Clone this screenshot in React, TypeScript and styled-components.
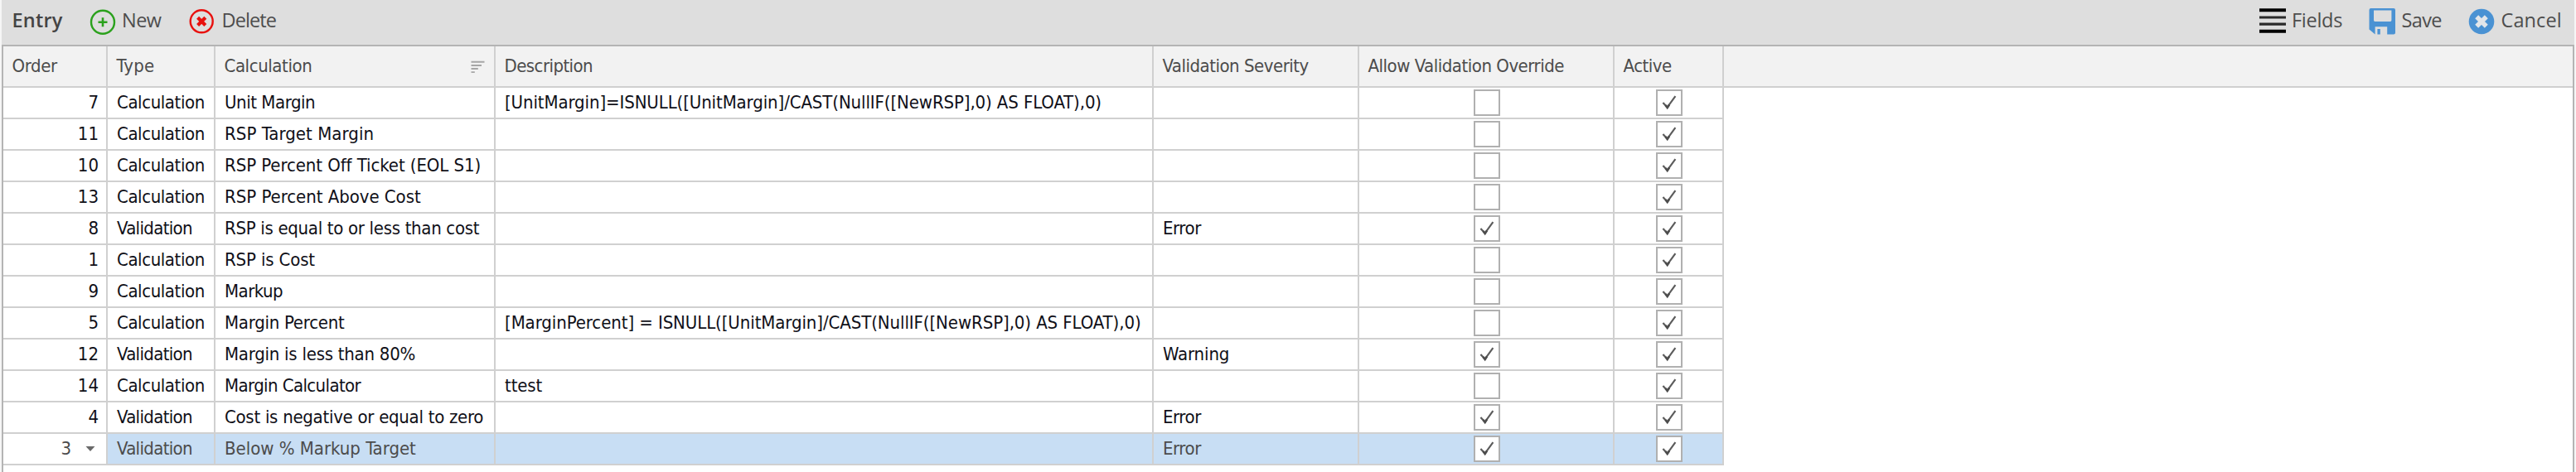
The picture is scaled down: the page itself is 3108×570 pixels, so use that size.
import React from 'react';
import styled, { createGlobalStyle } from 'styled-components';

const GlobalStyle = createGlobalStyle`
  *, *::before, *::after { box-sizing: border-box; }
  body { margin: 0; background: #fff; }
`;

const Page = styled.div`
  width: 3108px;
  height: 570px;
  padding: 0 2px;
  display: flex;
  flex-direction: column;
  overflow: hidden;
  background: #f6f6f6;
  font-family: 'DejaVu Sans Condensed', 'DejaVu Sans', sans-serif;
  font-size: 22px;
`;

const Toolbar = styled.header`
  height: 54px;
  flex: none;
  display: flex;
  align-items: flex-start;
  padding-left: 12.5px;
  background: #dedede;
  color: #4d4d4d;
  font-family: 'Open Sans', 'Noto Sans', sans-serif;
  font-size: 23.5px;
`;

const Title = styled.div`
  width: 93.3px;
  line-height: 49px;
  font-weight: 600;
  letter-spacing: 0.2px;
  color: #444;
`;

const ToolButton = styled.button<{ $width: number; $gap: number; $track: number }>`
  width: ${(p) => p.$width}px;
  height: 51px;
  padding: 0;
  border: 0;
  background: none;
  display: flex;
  align-items: flex-start;
  gap: ${(p) => p.$gap}px;
  font: inherit;
  line-height: 49px;
  color: inherit;
  letter-spacing: ${(p) => p.$track}px;
  white-space: nowrap;
`;

const Icon = styled.svg`
  flex: none;
  display: block;
`;

const Spacer = styled.div`
  flex: 1;
`;

const Grid = styled.main`
  flex: 1;
  border: 2px solid #b4b4b4;
  border-bottom: 0;
  background: #fff;
`;

const columns = '126px 130px 338px 794px 248px 308px 132px';

const HeaderRow = styled.div`
  display: grid;
  grid-template-columns: ${columns} 1fr;
  height: 50px;
  background: #f2f2f2;
  border-bottom: 2px solid #d0d0d0;
  color: #4c4c4c;
`;

const HeaderCell = styled.div<{ $track?: number }>`
  display: flex;
  justify-content: space-between;
  padding: 0 11px 0 10.5px;
  line-height: 48px;
  border-right: 2px solid #d0d0d0;
  letter-spacing: ${(p) => p.$track ?? 0}px;
  white-space: nowrap;
  &:last-child { border-right: 0; }
`;

const Row = styled.div<{ $selected?: boolean }>`
  display: grid;
  grid-template-columns: ${columns};
  width: 2076px;
  height: 38px;
  background: ${(p) => (p.$selected ? '#c8def4' : '#fff')};
  color: ${(p) => (p.$selected ? '#4c4c4c' : '#101018')};
`;

const Cell = styled.div<{ $track?: number }>`
  padding-left: 11px;
  line-height: 36px;
  border-right: 2px solid #d0d0d0;
  border-bottom: 2px solid #d0d0d0;
  letter-spacing: ${(p) => p.$track ?? 0}px;
  white-space: pre;
`;

const OrderCell = styled(Cell)`
  display: flex;
  justify-content: flex-end;
  align-items: center;
  gap: 17px;
  padding: 0 9px 0 0;
  background: #fff;
`;

const Arrow = styled(Icon)`
  margin-right: 4px;
`;

const CheckCell = styled(Cell)`
  display: flex;
  align-items: center;
  justify-content: center;
  padding-left: 2px;
`;

const Box = styled.div`
  width: 32px;
  height: 32px;
  border: 2px solid #b0b0b0;
  background: #fff;
`;

function Check({ on }: { on: boolean }) {
  return (
    <Box role="checkbox" aria-checked={on}>
      {on && (
        <Icon width="28" height="28" viewBox="2 2 28 28" fill="none">
          <path d="M8.4 16 L13.6 21.6 L23.4 8.2" stroke="#5c5c5c" strokeWidth="2.2" />
          <path d="M11.4 19 L13.7 22 L16 18.6" stroke="#4c4c4c" strokeWidth="2.6" />
        </Icon>
      )}
    </Box>
  );
}

const track: Record<string, number> = {
  Calculation: -0.42,
  Validation: -0.67,
  Error: -0.45,
  Warning: -0.14,
};

type Entry = {
  order: number;
  type: 'Calculation' | 'Validation';
  name: string;
  nameTrack: number;
  description?: string;
  descriptionTrack?: number;
  severity?: string;
  override?: boolean;
  selected?: boolean;
};

const entries: Entry[] = [
  { order: 7, type: 'Calculation', name: 'Unit Margin', nameTrack: -0.45, description: '[UnitMargin]=ISNULL([UnitMargin]/CAST(NullIF([NewRSP],0) AS FLOAT),0)', descriptionTrack: -0.11 },
  { order: 11, type: 'Calculation', name: 'RSP Target Margin', nameTrack: 0.05 },
  { order: 10, type: 'Calculation', name: 'RSP Percent Off Ticket (EOL S1)', nameTrack: -0.08 },
  { order: 13, type: 'Calculation', name: 'RSP Percent Above Cost', nameTrack: -0.04 },
  { order: 8, type: 'Validation', name: 'RSP is equal to or less than cost', nameTrack: -0.31, severity: 'Error', override: true },
  { order: 1, type: 'Calculation', name: 'RSP is Cost', nameTrack: -0.16 },
  { order: 9, type: 'Calculation', name: 'Markup', nameTrack: -0.51 },
  { order: 5, type: 'Calculation', name: 'Margin Percent', nameTrack: -0.27, description: '[MarginPercent] = ISNULL([UnitMargin]/CAST(NullIF([NewRSP],0) AS FLOAT),0)', descriptionTrack: -0.09 },
  { order: 12, type: 'Validation', name: 'Margin is less than 80%', nameTrack: -0.25, severity: 'Warning', override: true },
  { order: 14, type: 'Calculation', name: 'Margin Calculator', nameTrack: -0.6, description: 'ttest', descriptionTrack: -0.13 },
  { order: 4, type: 'Validation', name: 'Cost is negative or equal to zero', nameTrack: -0.28, severity: 'Error', override: true },
  { order: 3, type: 'Validation', name: 'Below % Markup Target', nameTrack: -0.02, severity: 'Error', override: true, selected: true },
];

export default function App() {
  return (
    <Page>
      <GlobalStyle />
      <Toolbar>
        <Title>Entry</Title>
        <ToolButton $width={119.7} $gap={7.2} $track={-0.5}>
          <Icon width="32" height="51" viewBox="0 0 32 51" fill="none" stroke="#2ba11d">
            <circle cx="16" cy="26.7" r="14" strokeWidth="2.4" />
            <path d="M10.5 26.7 H21.5 M16 21.2 V32.2" strokeWidth="2.6" />
          </Icon>
          New
        </ToolButton>
        <ToolButton $width={119.7} $gap={8} $track={-0.9}>
          <Icon width="32" height="51" viewBox="0 0 32 51" fill="none" stroke="#e8110f">
            <circle cx="16.2" cy="25.8" r="13.5" strokeWidth="2.4" />
            <path d="M11.6 21.2 L20.8 30.4 M20.8 21.2 L11.6 30.4" strokeWidth="4.2" />
          </Icon>
          Delete
        </ToolButton>
        <Spacer />
        <ToolButton $width={132} $gap={7} $track={-0.28}>
          <Icon width="32" height="51" viewBox="0 0 32 51">
            <path d="M0 10.2 H32 V14.2 H0 Z M0 35.8 H32 V39.8 H0 Z" fill="#000" />
            <path d="M0 19.4 H32 V22.6 H0 Z M0 27.6 H32 V30.8 H0 Z" fill="#2a2a2a" />
          </Icon>
          Fields
        </ToolButton>
        <ToolButton $width={119.7} $gap={7.5} $track={-0.65}>
          <Icon width="32" height="51" viewBox="0 0 32 51" fill="#4a92d3">
            <path
              fillRule="evenodd"
              d="M2.5 10 H30 Q32 10 32 12 V39.5 Q32 41.5 30 41.5 H22.2 V32.2 H7.6 V41.5 L0.5 35.5 V12 Q0.5 10 2.5 10 Z M6 12.4 V24.6 Q6 26 7.4 26 H26 Q27.4 26 27.4 24.6 V12.4 Z"
            />
            <path d="M10.4 35 H13.8 V41.5 H10.4 Z" />
          </Icon>
          Save
        </ToolButton>
        <ToolButton $width={128.3} $gap={7.8} $track={0.1}>
          <Icon width="32" height="51" viewBox="0 0 32 51" fill="none">
            <circle cx="16" cy="26" r="15.3" fill="#4a92d3" />
            <path d="M10.2 20.2 L21.8 31.8 M21.8 20.2 L10.2 31.8" stroke="#e2e6ea" strokeWidth="5.6" />
          </Icon>
          Cancel
        </ToolButton>
      </Toolbar>
      <Grid>
        <HeaderRow>
          <HeaderCell $track={-0.39}>Order</HeaderCell>
          <HeaderCell $track={0.19}>Type</HeaderCell>
          <HeaderCell $track={-0.42}>
            Calculation
            <Icon width="17" height="48" viewBox="0 0 17 48" fill="none" stroke="#a6a6a6" strokeWidth="1.9">
              <path d="M0.5 18.8 H16.5 M0.5 23 H13 M0.5 27 H8.8 M0.5 31.1 H4.8" />
            </Icon>
          </HeaderCell>
          <HeaderCell $track={-0.56}>Description</HeaderCell>
          <HeaderCell $track={-0.49}>Validation Severity</HeaderCell>
          <HeaderCell $track={-0.48}>Allow Validation Override</HeaderCell>
          <HeaderCell $track={-0.5}>Active</HeaderCell>
          <HeaderCell />
        </HeaderRow>
        {entries.map((e) => (
          <Row key={e.order} $selected={e.selected}>
            <OrderCell>
              {e.order}
              {e.selected && (
                <Arrow width="12" height="6" viewBox="0 0 12 6">
                  <path d="M0.5 0 H11.5 L6 6 Z" fill="#6a6a6a" />
                </Arrow>
              )}
            </OrderCell>
            <Cell $track={track[e.type]}>{e.type}</Cell>
            <Cell $track={e.nameTrack}>{e.name}</Cell>
            <Cell $track={e.descriptionTrack}>{e.description}</Cell>
            <Cell $track={track[e.severity ?? '']}>{e.severity}</Cell>
            <CheckCell><Check on={!!e.override} /></CheckCell>
            <CheckCell><Check on /></CheckCell>
          </Row>
        ))}
      </Grid>
    </Page>
  );
}
